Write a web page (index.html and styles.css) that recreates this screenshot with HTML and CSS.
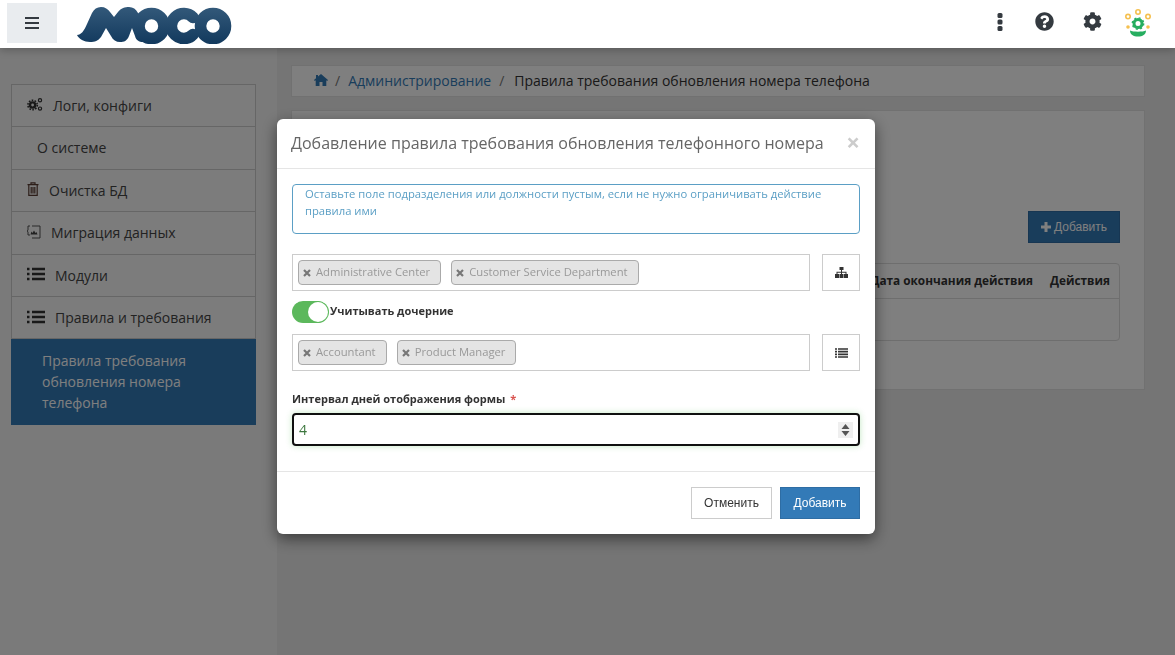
FILE: index.html
```html
<!DOCTYPE html>
<html lang="en">
<head>
    <meta charset="UTF-8">
    <meta name="viewport" content="width=device-width, initial-scale=1.0">
    <title>MOCO</title>
    <link rel="stylesheet" href="styles.css">
</head>
<body>
    <header class="topbar">
        <button class="menu-btn">
            <svg width="14" height="12" viewBox="0 0 14 12"><path d="M0 1h14M0 6h14M0 11h14" stroke="#343a40" stroke-width="2"/></svg>
        </button>
        <svg class="logo" width="156" height="38" viewBox="76 6 156 38">
            <defs>
                <linearGradient id="logoGrad" gradientUnits="userSpaceOnUse" x1="0" y1="7" x2="0" y2="43">
                    <stop offset="0" stop-color="#33597a"/>
                    <stop offset="1" stop-color="#133a5e"/>
                </linearGradient>
            </defs>
            <path fill="url(#logoGrad)" d="M77 35C81 35 84 31 87 24L92 13C94 9 97 7 101 7C105 7 108 9 110 12L114 17L118 12C121 8 125 7 129 7C133 7 136 9 138 13L143 24V42C139 42 136 40 135 36L132 28L129 36C127 41 124 42 120 42C116 42 113 40 111 36L106 28L101 37C98 41 95 42 90 42C84 42 79 39 77 35Z"/>
            <g fill="none" stroke="url(#logoGrad)" stroke-width="11.6" stroke-linecap="round">
                <circle cx="151.500" cy="26" r="12.500"/>
                <path d="M193 17.500A12.500 12.500 0 1 0 193 34.500"/>
                <circle cx="213" cy="26" r="12.500"/>
            </g>
        </svg>
        <div class="top-icons">
            <svg class="top-kebab" width="6" height="18" viewBox="0 0 6 18"><g fill="#343a40"><rect x="0.5" width="5" height="5" rx="1.5"/><rect x="0.5" y="6.5" width="5" height="5" rx="1.5"/><rect x="0.5" y="13" width="5" height="5" rx="1.5"/></g></svg>
            <svg class="top-help" width="19" height="19" viewBox="0 0 512 512"><path fill="#343a40" d="M504 256c0 136.997-111.043 248-248 248S8 392.997 8 256C8 119.083 119.043 8 256 8s248 111.083 248 248zM262.655 90c-54.497 0-89.255 22.957-116.549 63.758-3.536 5.286-2.353 12.415 2.715 16.258l34.699 26.31c5.205 3.947 12.621 3.008 16.665-2.122 17.864-22.658 30.113-35.797 57.303-35.797 20.429 0 45.698 13.148 45.698 32.958 0 14.976-12.363 22.667-32.534 33.976C247.128 238.528 216 254.941 216 296v4c0 6.627 5.373 12 12 12h56c6.627 0 12-5.373 12-12v-1.333c0-28.462 83.186-29.647 83.186-106.667 0-58.002-60.165-102-116.531-102zM256 338c-25.365 0-46 20.635-46 46 0 25.364 20.635 46 46 46s46-20.636 46-46c0-25.365-20.635-46-46-46z"/></svg>
            <svg class="top-gear" width="19" height="19" viewBox="0 0 512 512"><path fill="#343a40" d="M487.4 315.7l-42.6-24.6c4.3-23.2 4.3-47 0-70.2l42.6-24.6c4.9-2.8 7.1-8.6 5.5-14-11.1-35.6-30-67.8-54.7-94.6-3.8-4.1-10-5.1-14.8-2.3L380.8 110c-17.9-15.4-38.5-27.3-60.8-35.1V25.8c0-5.6-3.9-10.5-9.4-11.7-36.7-8.2-74.3-7.8-109.2 0-5.5 1.2-9.4 6.1-9.4 11.7V75c-22.2 7.9-42.8 19.8-60.8 35.1L88.7 85.5c-4.9-2.8-11-1.9-14.8 2.3-24.7 26.7-43.6 58.9-54.7 94.6-1.7 5.4.6 11.2 5.5 14L67.3 221c-4.3 23.2-4.3 47 0 70.2l-42.6 24.6c-4.9 2.8-7.1 8.6-5.5 14 11.1 35.6 30 67.8 54.7 94.6 3.8 4.1 10 5.1 14.8 2.3l42.6-24.6c17.9 15.4 38.5 27.3 60.8 35.1v49.2c0 5.6 3.9 10.5 9.4 11.7 36.7 8.2 74.3 7.8 109.2 0 5.5-1.2 9.4-6.1 9.4-11.7v-49.2c22.2-7.9 42.8-19.8 60.8-35.1l42.6 24.6c4.9 2.8 11 1.9 14.8-2.3 24.7-26.7 43.6-58.9 54.7-94.6 1.5-5.5-.7-11.3-5.6-14.1zM256 336c-44.1 0-80-35.9-80-80s35.9-80 80-80 80 35.9 80 80-35.9 80-80 80z"/></svg>
            <svg width="28" height="30" viewBox="0 0 28 30">
                <g fill="none" stroke="#f5c04f" stroke-width="1.6">
                    <circle cx="14" cy="3" r="2.2"/><circle cx="4" cy="7.6" r="2.2"/><circle cx="24" cy="7.6" r="2.2"/>
                </g>
                <circle cx="4" cy="18" r="1.8" fill="#f5c04f"/><circle cx="24" cy="18" r="1.8" fill="#f5c04f"/>
                <circle cx="14" cy="14.5" r="4" fill="none" stroke="#27ae60" stroke-width="3"/>
                <circle cx="14" cy="14.5" r="5.7" fill="none" stroke="#27ae60" stroke-width="1.4" stroke-dasharray="2 2.48"/>
                <path d="M6 21.5c3 1.6 13 1.6 16 0 0 4-3.5 6-8 6s-8-2-8-6z" fill="#27ae60"/>
            </svg>
        </div>
    </header>

    <div class="page">
        <aside class="sidebar">
            <ul class="side-menu">
                <li>
                    <svg class="ico" width="16" height="15" viewBox="0 0 16 15">
                        <g fill="none" stroke="#333">
                            <circle cx="5.6" cy="8" r="2.6" stroke-width="2.4"/>
                            <circle cx="5.6" cy="8" r="4.7" stroke-width="1.6" stroke-dasharray="1.6 1.35"/>
                            <circle cx="13" cy="3.2" r="1.6" stroke-width="1.2"/>
                            <circle cx="13" cy="11.6" r="1.6" stroke-width="1.2"/>
                        </g>
                    </svg>
                    Логи, конфиги
                </li>
                <li class="plain">О системе</li>
                <li>
                    <svg class="ico" width="12" height="14" viewBox="0 0 12 14">
                        <g fill="none" stroke="#5a3d33" stroke-width="1.2">
                            <path d="M.5 2.6h11M4 2.4V.8h4v1.6M1.8 2.8v10.6h8.4V2.8"/>
                            <path d="M4.2 5v6.5M6 5v6.5M7.8 5v6.5"/>
                        </g>
                    </svg>
                    Очистка БД
                </li>
                <li>
                    <svg class="ico" width="14" height="14" viewBox="0 0 14 14">
                        <path d="M3 1H1v4L.2 6 1 7v3h2M5 1h8v12H5" fill="none" stroke="#444" stroke-width=".9"/>
                        <path d="M3.5 9.5l1-3 1 1.5 1.5-2.5 1.5 2.500 1-1 1 2.500z" fill="#444"/>
                    </svg>
                    Миграция данных
                </li>
                <li>
                    <svg class="ico" width="18" height="14" viewBox="0 0 18 14"><path class="list-ico" d="M5 2h13M5 7h13M5 12h13M0 2h2.500M0 7h2.500M0 12h2.500"/></svg>
                    Модули
                </li>
                <li>
                    <svg class="ico" width="18" height="14" viewBox="0 0 18 14"><path class="list-ico" d="M5 2h13M5 7h13M5 12h13M0 2h2.500M0 7h2.500M0 12h2.500"/></svg>
                    Правила и требования
                </li>
                <li class="active">Правила требования обновления номера телефона</li>
            </ul>
        </aside>

        <main class="content">
            <nav class="crumbs">
                <svg width="14" height="12" viewBox="0 0 14 12"><path fill="#337ab7" d="M7 0l7 6-.8.9-.9-.7V12H8.500V8h-3v4H1.700V6.200l-.9.7L0 6l2-1.700V1h2v1.600z"/></svg>
                <span class="sep">/</span>
                <a href="#">Администрирование</a>
                <span class="sep">/</span>
                <span>Правила требования обновления номера телефона</span>
            </nav>
            <section class="panel">
                <div class="panel-tools">
                    <button class="add-btn">
                        <svg width="10" height="10" viewBox="0 0 10 10"><path d="M0 5h10M5 0v10" stroke="#fff" stroke-width="3"/></svg>
                        Добавить
                    </button>
                </div>
                <div class="table-box">
                    <div class="table-head">
                        <span>Дата окончания действия</span>
                        <span>Действия</span>
                    </div>
                </div>
            </section>
        </main>
    </div>

    <div class="backdrop"></div>

    <div class="modal">
        <div class="modal-head">
            <h4>Добавление правила требования обновления телефонного номера</h4>
            <span class="close">×</span>
        </div>
        <div class="modal-body">
            <div class="note">Оставьте поле подразделения или должности пустым, если не нужно ограничивать действие правила ими</div>

            <div class="pick-row">
                <div class="pick">
                    <span class="tag"><svg class="tag-x" width="8" height="8" viewBox="0 0 8 8"><path d="M1 1l6 6M7 1L1 7"/></svg>Administrative Center</span>
                    <span class="tag"><svg class="tag-x" width="8" height="8" viewBox="0 0 8 8"><path d="M1 1l6 6M7 1L1 7"/></svg>Customer Service Department</span>
                </div>
                <button class="pick-btn">
                    <svg width="13" height="11" viewBox="0 0 13 11"><path fill="#333" d="M4.500 0h4v3H7v1.800h4.500V7h1.500v4H9V7h1.500V5.800h-3.500V7h1.500v4h-4V7H6V5.800H2.500V7H4v4H0V7h1.500V4.800H6V3H4.500z"/></svg>
                </button>
            </div>

            <div class="switch-row">
                <span class="switch"><i></i></span>
                <label>Учитывать дочерние</label>
            </div>

            <div class="pick-row">
                <div class="pick">
                    <span class="tag"><svg class="tag-x" width="8" height="8" viewBox="0 0 8 8"><path d="M1 1l6 6M7 1L1 7"/></svg>Accountant</span>
                    <span class="tag"><svg class="tag-x" width="8" height="8" viewBox="0 0 8 8"><path d="M1 1l6 6M7 1L1 7"/></svg>Product Manager</span>
                </div>
                <button class="pick-btn">
                    <svg width="13" height="10" viewBox="0 0 13 10"><path d="M0 1h2M3 1h10M0 3.700h2M3 3.700h10M0 6.400h2M3 6.400h10M0 9h2M3 9h10" stroke="#333" stroke-width="1.700"/></svg>
                </button>
            </div>

            <div class="field-label">Интервал дней отображения формы <em>*</em></div>
            <div class="num-input">
                <span>4</span>
                <span class="spin">
                    <svg width="9" height="14" viewBox="0 0 9 14"><path fill="#555" d="M4.500 1l4 5H.5zM4.500 13l-4-5h8z"/></svg>
                </span>
            </div>
        </div>
        <div class="modal-foot">
            <button class="btn">Отменить</button>
            <button class="btn primary">Добавить</button>
        </div>
    </div>
</body>
</html>
```
FILE: styles.css
```css
* { box-sizing: border-box; }
html, body { height: 100%; }
body { margin: 0; font-family: "Open Sans", "Noto Sans", Arial, sans-serif; font-size: 14px; line-height: 1.5; color: #333; background: #ebebeb; overflow: hidden; }
button { font-family: inherit; }

.topbar { position: relative; z-index: 20; height: 48px; background: #fff; display: flex; align-items: flex-start; padding: 3px 0 0 7px; box-shadow: 0 2px 8px rgba(0,0,0,0.25); }
.menu-btn { width: 50px; height: 40px; border: none; background: #e9ecef; display: flex; align-items: center; justify-content: center; padding: 0; }
.logo { margin: 3px 0 0 19px; }
.top-icons { margin-left: auto; margin-top: 6px; padding-right: 23px; display: flex; align-items: flex-start; }
.top-kebab { margin: 4px 32px 0 0; }
.top-help { margin: 3px 29px 0 0; }
.top-gear { margin: 3px 22px 0 0; }

.page { display: flex; height: calc(100% - 48px); }
.sidebar { width: 277px; flex: none; padding: 36px 21px 0 11px; background: #f4f4f4; }
.side-menu { list-style: none; margin: 0; padding: 0; border: 1px solid #ccc; border-bottom: none; background: #f8f8f8; }
.side-menu li { display: flex; align-items: center; gap: 10px; height: 42.4px; padding: 0 15px; border-bottom: 1px solid #ccc; color: #444; font-size: 14px; }
.side-menu .plain { padding: 0 15px 1px 25px; }
.side-menu .active { display: block; height: 86px; margin: 0 -1px; padding: 11px 31px 0 31px; background: #337ab7; border: none; color: #fff; }
.ico { flex: none; margin-top: -2px; }
.list-ico { fill: none; stroke: #333; stroke-width: 2.400; }

.content { flex: 1; padding: 17px 30px 0 14px; }
.crumbs { height: 32px; background: #fff; border: 1px solid #e2e2e2; display: flex; align-items: center; padding: 0 0 2px 22px; font-size: 14px; }
.crumbs a { color: #337ab7; text-decoration: none; }
.crumbs .sep { margin: 0 8px 0 7px; color: #777; }
.crumbs a + .sep { margin: 0 10px 0 8px; }
.panel { margin-top: 13px; height: 280px; background: #fff; border: 1px solid #e2e2e2; padding: 100px 24px 0; }
.panel-tools { display: flex; justify-content: flex-end; }
.add-btn { width: 92px; height: 32px; background: #337ab7; border: 1px solid #2e6da4; color: #fff; font-family: "Liberation Sans", Arial, sans-serif; font-size: 12px; padding: 0; display: flex; align-items: center; justify-content: center; gap: 3px; }
.table-box { margin-top: 20px; height: 78px; border: 1px solid #ddd; border-radius: 4px; }
.table-head { height: 35px; border-bottom: 1px solid #ddd; display: flex; justify-content: flex-end; align-items: center; gap: 17px; padding-right: 9px; font-size: 11.8px; font-weight: 700; }

.backdrop { position: fixed; top: 48px; left: 0; right: 0; bottom: 0; background: rgba(0,0,0,0.5); z-index: 10; }

.modal { position: fixed; top: 119px; left: 277px; width: 598px; height: 415px; background: #fff; border-radius: 6px; box-shadow: 0 5px 15px rgba(0,0,0,0.5); z-index: 30; display: flex; flex-direction: column; }
.modal-head { height: 50px; flex: none; border-bottom: 1px solid #e5e5e5; display: flex; align-items: center; justify-content: space-between; padding: 0 15px 0 14px; }
.modal-head h4 { margin: 0; font-size: 16.05px; font-weight: 400; color: #666; }
.close { font-size: 24px; font-weight: 700; color: #ccc; line-height: 1; margin-top: -3px; }
.modal-body { flex: 1; padding: 15px 15px 0; }
.note { height: 50px; border: 1px solid #5b9fc5; border-radius: 4px; padding: 0 12px; font-size: 11.25px; line-height: 17px; color: #5b9fc5; }
.pick-row { display: flex; gap: 12px; margin-top: 20px; }
.pick { flex: 1; height: 37px; border: 1px solid #ccc; display: flex; align-items: center; gap: 10px; padding: 0 5px; }
.tag { height: 25px; border: 1px solid #aaa; border-radius: 4px; background: #e4e4e4; color: #999; font-size: 11.25px; display: flex; align-items: center; padding: 0 10px 0 4px; }
.tag-x { margin-right: 5px; fill: none; stroke: #777; stroke-width: 2.2; }
.pick-btn { width: 38px; height: 37px; flex: none; border: 1px solid #ccc; background: #fff; display: flex; align-items: center; justify-content: center; padding: 0; }
.switch-row { display: flex; align-items: center; height: 22px; margin-top: 10px; font-size: 11px; font-weight: 700; }
.switch-row label { margin-top: -2px; }
.switch-row + .pick-row { margin-top: 11px; }
.switch { width: 36px; height: 22px; border-radius: 11px; background: #5cb85c; position: relative; margin-right: 2px; flex: none; }
.switch i { position: absolute; top: 1px; right: 0; width: 20px; height: 20px; border-radius: 50%; background: #fff; box-shadow: 0 0 0 1px #5cb85c; }
.field-label { margin-top: 19px; font-size: 11px; font-weight: 700; line-height: 17px; }
.field-label em { color: #d9534f; font-style: normal; margin-left: 2px; }
.num-input { margin-top: 6px; height: 33px; border: 2px solid #101010; border-radius: 4px; box-shadow: 0 0 6px rgba(60,180,60,0.3); display: flex; align-items: center; justify-content: space-between; padding: 0 5px; color: #3c763d; font-size: 14px; }
.spin { width: 15px; height: 16px; background: #efefef; display: flex; align-items: center; justify-content: center; }
.modal-foot { height: 63px; flex: none; border-top: 1px solid #e5e5e5; display: flex; justify-content: flex-end; gap: 8px; padding: 15px 15px 0 0; }
.btn { height: 32px; width: 81px; border: 1px solid #ccc; background: #fff; color: #333; font-family: "Liberation Sans", Arial, sans-serif; font-size: 12px; padding: 0; }
.btn.primary { width: 80px; background: #337ab7; border-color: #2e6da4; color: #fff; font-weight: 400; }
```
